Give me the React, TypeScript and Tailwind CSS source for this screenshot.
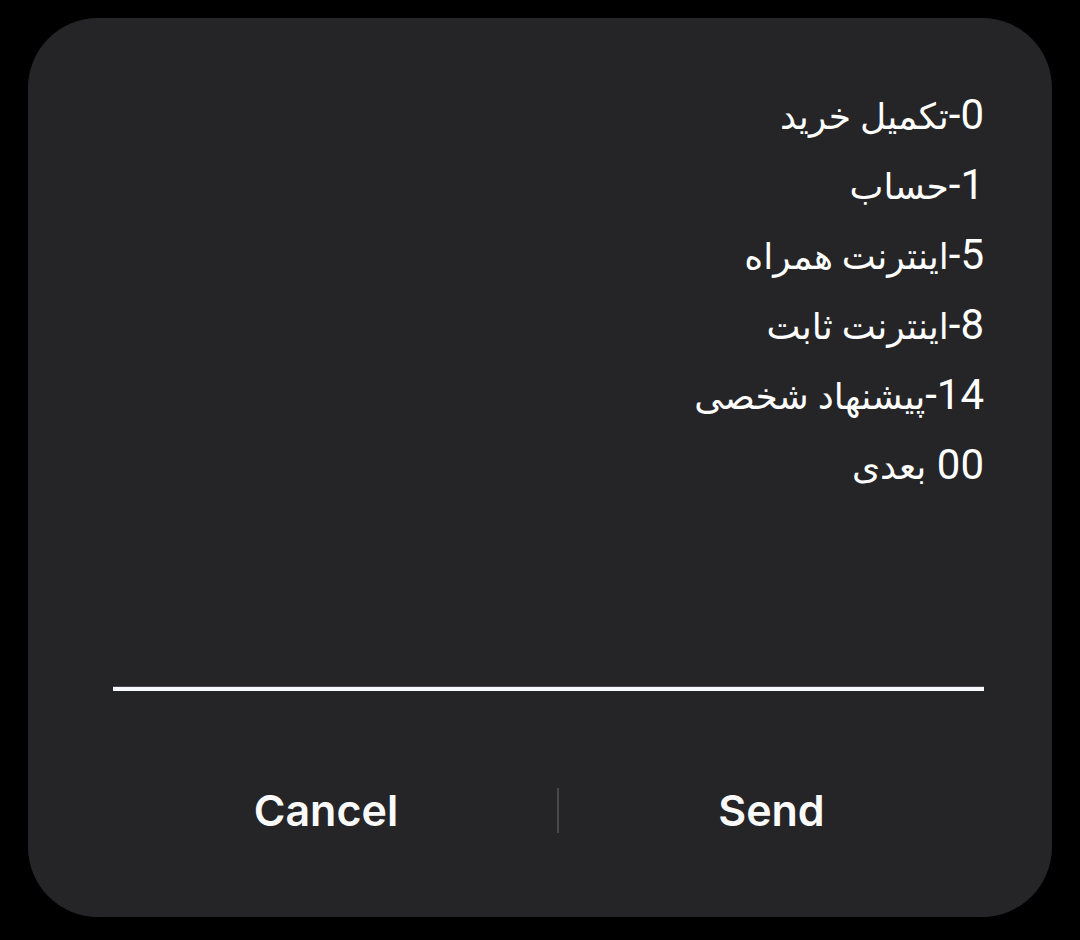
import React from "react";

const items: [string, string][] = [
  ["0-", "تکمیل خرید"],
  ["1-", "حساب"],
  ["5-", "اینترنت همراه"],
  ["8-", "اینترنت ثابت"],
  ["14-", "پیشنهاد شخصی"],
  ["00 ", "بعدی"],
];

export default function App() {
  return (
    <div className="w-[1080px] h-[940px] bg-black pt-[18px] pl-[28px]">
      <div className="w-[1024px] h-[899px] bg-[#252527] rounded-[70px] flex flex-col pl-[85px] pr-[68px] pt-[62px]">
        <div
          dir="rtl"
          className="flex flex-col text-white text-[42px]"
          style={{ fontFamily: '"Roboto", "DejaVu Sans", sans-serif' }}
        >
          {items.map(([n, t]) => (
            <div key={t} className="h-[70px] leading-[70px] text-right whitespace-pre">
              {n}
              <span className="text-[36px] leading-none">{t}</span>
            </div>
          ))}
        </div>
        <div className="mt-[186px] h-[5px] border-t border-[#4a4a4e] bg-[#f8f8ff]" />
        <div
          className="mt-[74px] h-[90px] flex items-center -ml-[18px] text-[#fafafa] font-semibold text-[43px]"
          style={{ fontFamily: '"Inter", "Roboto", sans-serif' }}
        >
          <div className="w-[464px] text-center">Cancel</div>
          <div className="w-[2px] h-[45px] bg-[#48484b]" />
          <div className="w-[427px] text-center">Send</div>
        </div>
      </div>
    </div>
  );
}
